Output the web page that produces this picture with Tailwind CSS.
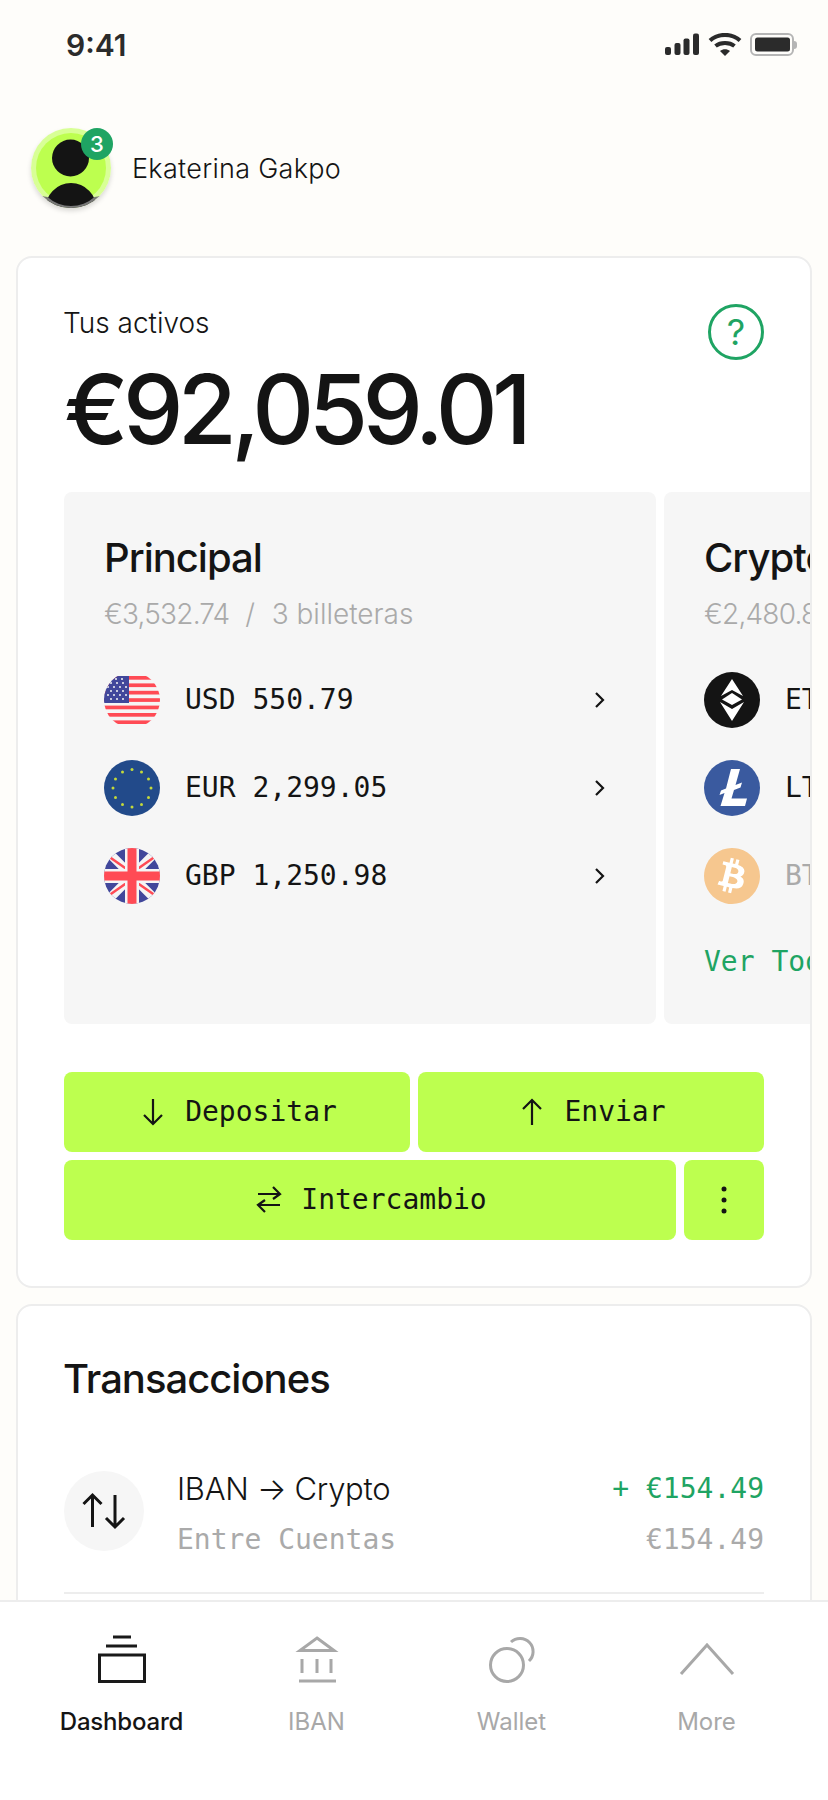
<!DOCTYPE html>
<html lang="es">
<head>
  <meta charset="UTF-8">
  <meta name="viewport" content="width=device-width, initial-scale=1.0">
  <title>Dashboard</title>
  <script src="https://cdn.jsdelivr.net/npm/@tailwindcss/browser@4"></script>
</head>
<body class="bg-[#fefdfa] font-['Inter',sans-serif] text-[#141414]">
  <div class="flex flex-col h-[1800px] overflow-hidden">
    <main class="flex-1 overflow-hidden">

      <!-- Status bar -->
      <div class="flex items-center justify-between h-[90px] pl-[66px] pr-[31px]">
        <span class="text-[30px] font-semibold text-[#2b2b2b]">9:41</span>
        <div class="flex items-center">
          <svg class="w-[130px] h-[24px]" viewBox="0 0 130 24" fill="#2b2b2b">
            <rect x="1" y="14" width="6" height="8" rx="2"/>
            <rect x="10.500" y="10" width="6" height="12" rx="2"/>
            <rect x="19.500" y="5.500" width="6" height="16.500" rx="2"/>
            <rect x="29" y="0.500" width="6" height="21.500" rx="2"/>
            <path d="M46 7.500 C54 0 68 0 76 7.500" fill="none" stroke="#2b2b2b" stroke-width="4"/>
            <path d="M51.500 13 C56.500 9 65.500 9 70.500 13" fill="none" stroke="#2b2b2b" stroke-width="4"/>
            <path d="M56 18 C59 15.500 63 15.500 66 18 L61 23 Z"/>
            <rect x="87" y="1" width="42" height="21" rx="5" fill="none" stroke="#b5b5b5" stroke-width="2"/>
            <rect x="91" y="4.500" width="35" height="14" rx="2.500"/>
          </svg>
          <span class="w-[3px] h-[8px] bg-[#b5b5b5] rounded-r-sm"></span>
        </div>
      </div>

      <!-- Profile -->
      <div class="flex items-center gap-[21px] pl-[31px] pt-[38px] pb-[48px]">
        <div class="relative w-[80px] h-[80px] rounded-full shadow-[0_3px_5px_rgba(0,0,0,0.15)]">
          <svg class="w-[80px] h-[80px]" viewBox="0 0 80 80">
            <defs><clipPath id="avatarClip"><circle cx="40" cy="40" r="40"/></clipPath></defs>
            <circle cx="40" cy="40" r="40" fill="#d8ff96"/>
            <circle cx="40" cy="40" r="35" fill="#bdff4f"/>
            <circle cx="39.500" cy="30" r="18.500" fill="#141414"/>
            <g clip-path="url(#avatarClip)">
              <ellipse cx="40" cy="82" rx="26" ry="27" fill="#141414"/>
              <path d="M16.500 69 L10 68 A40 40 0 0 0 70 68 L63.500 69 A35 35 0 0 1 16.500 69 Z" fill="#777"/>
            </g>
          </svg>
          <span class="absolute top-0 left-[50px] w-[32px] h-[32px] rounded-full bg-[#1fa463] text-white text-[22px] font-medium flex items-center justify-center">3</span>
        </div>
        <span class="text-[27px] font-light tracking-[0.3px] relative top-[1px]">Ekaterina Gakpo</span>
      </div>

      <!-- Assets card -->
      <section class="mx-[16px] h-[1032px] bg-white border-2 border-[#ededed] rounded-[16px] overflow-hidden px-[46px]">
        <div class="relative pt-[45px]">
          <p class="text-[28px] leading-[40px] font-light -ml-[1px]">Tus activos</p>
          <p class="text-[96px] leading-[108px] mt-[12px] font-medium tracking-[-5.6px]">€92,059.01</p>
          <span class="absolute top-[46px] right-0 w-[56px] h-[56px] rounded-full border-[3px] border-[#1fa463] text-[#1fa463] text-[36px] flex items-center justify-center">?</span>
        </div>

        <!-- Wallet panels -->
        <div class="flex gap-[8px] mt-[29px] -mr-[46px] overflow-hidden">
          <div class="w-[592px] h-[532px] shrink-0 bg-[#f6f6f6] rounded-[8px] pl-[40px] pr-[40px] pt-[40px]">
            <h3 class="text-[40px] leading-[52px] font-medium tracking-[-1px]">Principal</h3>
            <p class="text-[28px] leading-[40px] mt-[10px] font-light text-[#aaaaaa] whitespace-pre"><span class="tracking-[-0.8px]">€3,532.74</span>  /  <span class="ml-[1px]">3 billeteras</span></p>
            <ul class="mt-[38px] font-['DejaVu_Sans_Mono',monospace] text-[28px]">
              <li class="flex items-center h-[56px] gap-[25px]">
                <svg class="w-[56px] h-[56px] shrink-0" viewBox="0 0 56 56">
                  <defs>
                    <clipPath id="usCircle"><circle cx="28" cy="28" r="28"/></clipPath>
                    <clipPath id="usBand"><rect y="4" width="56" height="48"/></clipPath>
                  </defs>
                  <g clip-path="url(#usCircle)">
                    <g clip-path="url(#usBand)">
                      <rect width="56" height="56" fill="#f5f5f5"/>
                      <rect y="4" width="56" height="3.700" fill="#ff4b55"/>
                      <rect y="11.400" width="56" height="3.700" fill="#ff4b55"/>
                      <rect y="18.800" width="56" height="3.700" fill="#ff4b55"/>
                      <rect y="26.200" width="56" height="3.700" fill="#ff4b55"/>
                      <rect y="33.600" width="56" height="3.700" fill="#ff4b55"/>
                      <rect y="41" width="56" height="3.700" fill="#ff4b55"/>
                      <rect y="48.400" width="56" height="3.700" fill="#ff4b55"/>
                      <rect y="4" width="25" height="27" fill="#41479b"/>
                      <g fill="#f5f5f5">
                        <circle cx="12" cy="7" r="1"/><circle cx="18" cy="7" r="1"/><circle cx="7" cy="11" r="1"/><circle cx="13" cy="11" r="1"/><circle cx="19" cy="11" r="1"/>
                        <circle cx="4" cy="15" r="1"/><circle cx="10" cy="15" r="1"/><circle cx="16" cy="15" r="1"/><circle cx="22" cy="15" r="1"/>
                        <circle cx="7" cy="19" r="1"/><circle cx="13" cy="19" r="1"/><circle cx="19" cy="19" r="1"/><circle cx="4" cy="23" r="1"/><circle cx="10" cy="23" r="1"/><circle cx="16" cy="23" r="1"/><circle cx="22" cy="23" r="1"/>
                        <circle cx="7" cy="27" r="1"/><circle cx="13" cy="27" r="1"/><circle cx="19" cy="27" r="1"/>
                      </g>
                    </g>
                  </g>
                </svg>
                <span class="flex-1">USD 550.79</span>
                <svg class="w-[24px] h-[24px] mr-[4px]" viewBox="0 0 24 24" fill="none" stroke="#141414" stroke-width="2.200"><path d="M8 5 L15 12 L8 19"/></svg>
              </li>
              <li class="flex items-center h-[56px] gap-[25px] mt-[32px]">
                <svg class="w-[56px] h-[56px] shrink-0" viewBox="0 0 56 56">
                  <circle cx="28" cy="28" r="28" fill="#224a8a"/>
                  <g fill="#c4d93a">
                    <circle cx="28" cy="9.500" r="1.500"/><circle cx="37.500" cy="12" r="1.500"/><circle cx="44.500" cy="19" r="1.500"/><circle cx="47" cy="28" r="1.500"/><circle cx="44.500" cy="37.500" r="1.500"/><circle cx="37.500" cy="44.500" r="1.500"/>
                    <circle cx="28" cy="47" r="1.500"/><circle cx="18.500" cy="44.500" r="1.500"/><circle cx="11.500" cy="37.500" r="1.500"/><circle cx="9" cy="28" r="1.500"/><circle cx="11.500" cy="19" r="1.500"/><circle cx="18.500" cy="12" r="1.500"/>
                  </g>
                </svg>
                <span class="flex-1">EUR 2,299.05</span>
                <svg class="w-[24px] h-[24px] mr-[4px]" viewBox="0 0 24 24" fill="none" stroke="#141414" stroke-width="2.200"><path d="M8 5 L15 12 L8 19"/></svg>
              </li>
              <li class="flex items-center h-[56px] gap-[25px] mt-[32px]">
                <svg class="w-[56px] h-[56px] shrink-0" viewBox="0 0 56 56">
                  <defs><clipPath id="ukClip"><circle cx="28" cy="28" r="28"/></clipPath></defs>
                  <g clip-path="url(#ukClip)">
                    <rect width="56" height="56" fill="#41479b"/>
                    <path d="M0 0 L56 56 M56 0 L0 56" stroke="#f5f5f5" stroke-width="9"/>
                    <path d="M4 8 L24 22 M52 8 L32 22 M4 48 L24 34 M52 48 L32 34" stroke="#ff4b55" stroke-width="2.500"/>
                    <path d="M28 0 V56 M0 28 H56" stroke="#f5f5f5" stroke-width="14"/>
                    <path d="M28 0 V56 M0 28 H56" stroke="#ff4b55" stroke-width="9"/>
                  </g>
                </svg>
                <span class="flex-1">GBP 1,250.98</span>
                <svg class="w-[24px] h-[24px] mr-[4px]" viewBox="0 0 24 24" fill="none" stroke="#141414" stroke-width="2.200"><path d="M8 5 L15 12 L8 19"/></svg>
              </li>
            </ul>
          </div>

          <div class="w-[592px] h-[532px] shrink-0 bg-[#f6f6f6] rounded-[8px] pl-[40px] pt-[40px]">
            <h3 class="text-[40px] leading-[52px] font-medium tracking-[-1px]">Crypto</h3>
            <p class="text-[28px] leading-[40px] mt-[10px] font-light text-[#aaaaaa] whitespace-pre"><span class="tracking-[-0.8px]">€2,480.85</span>  /  <span class="ml-[1px]">3 billeteras</span></p>
            <ul class="mt-[38px] font-['DejaVu_Sans_Mono',monospace] text-[28px]">
              <li class="flex items-center h-[56px] gap-[25px]">
                <svg class="w-[56px] h-[56px] shrink-0" viewBox="0 0 56 56">
                  <circle cx="28" cy="28" r="28" fill="#141414"/>
                  <path d="M28 7 L39 24 L28 18 L17 24 Z" fill="#fff"/>
                  <path d="M28 21 L38 27.500 L28 33 L18 27.500 Z" fill="#fff"/>
                  <path d="M16 30 L28 37 L40 30 L28 49 Z" fill="#fff"/>
                </svg>
                <span class="whitespace-nowrap">ETH 0.45</span>
              </li>
              <li class="flex items-center h-[56px] gap-[25px] mt-[32px]">
                <svg class="w-[56px] h-[56px] shrink-0" viewBox="0 0 56 56">
                  <circle cx="28" cy="28" r="28" fill="#3a5a9f"/>
                  <path d="M27 9 H36 L31.500 25 L38 22.500 L36.500 27.500 L30 30 L27.500 38.500 H43 L41 46 H16.500 L20.500 33 L15.500 35 L17 30.500 L22 28.500 Z" fill="#fff"/>
                </svg>
                <span class="whitespace-nowrap">LTC 12.30</span>
              </li>
              <li class="flex items-center h-[56px] gap-[25px] mt-[32px]">
                <svg class="w-[56px] h-[56px] shrink-0" viewBox="0 0 24 24">
                  <circle cx="12" cy="12" r="11" fill="#fff"/>
                  <path fill="#f6c78f" d="M23.638 14.904c-1.602 6.43-8.113 10.34-14.542 8.736C2.67 22.05-1.244 15.525.362 9.105 1.962 2.67 8.475-1.243 14.9.358c6.43 1.605 10.342 8.115 8.738 14.548v-.002zm-6.35-4.613c.24-1.59-.974-2.45-2.64-3.03l.54-2.153-1.315-.33-.525 2.107c-.345-.087-.705-.167-1.064-.25l.526-2.127-1.32-.33-.54 2.165c-.285-.067-.565-.132-.84-.2l-1.815-.45-.35 1.407s.975.225.955.236c.535.136.63.486.615.766l-1.477 5.92c-.075.166-.24.406-.614.314.015.02-.96-.24-.96-.24l-.66 1.51 1.71.426.93.242-.54 2.19 1.32.327.54-2.17c.36.1.705.19 1.05.273l-.51 2.154 1.32.33.545-2.19c2.24.427 3.93.257 4.64-1.774.57-1.637-.03-2.58-1.217-3.196.854-.193 1.5-.76 1.68-1.93h.01zm-3.01 4.22c-.404 1.64-3.157.75-4.05.53l.72-2.9c.896.23 3.757.67 3.33 2.37zm.41-4.24c-.37 1.49-2.662.735-3.405.55l.654-2.64c.744.18 3.137.524 2.75 2.084v.006z"/>
                </svg>
                <span class="whitespace-nowrap text-[#aaaaaa]">BTC 0.02</span>
              </li>
            </ul>
            <p class="mt-[38px] text-[28px] leading-[40px] font-['DejaVu_Sans_Mono',monospace] text-[#1fa463] whitespace-nowrap">Ver Todo</p>
          </div>
        </div>

        <!-- Actions -->
        <div class="mt-[48px] flex flex-col gap-[8px] font-['DejaVu_Sans_Mono',monospace] text-[28px]">
          <div class="flex gap-[8px]">
            <button class="flex-1 h-[80px] bg-[#bdff4f] rounded-[8px] flex items-center justify-center gap-[16px]">
              <svg class="w-[32px] h-[32px]" viewBox="0 0 32 32" fill="none" stroke="#141414" stroke-width="2.200"><path d="M16 3 V28 M7 19 L16 28 L25 19"/></svg>
              <span>Depositar</span>
            </button>
            <button class="flex-1 h-[80px] bg-[#bdff4f] rounded-[8px] flex items-center justify-center gap-[16px]">
              <svg class="w-[32px] h-[32px]" viewBox="0 0 32 32" fill="none" stroke="#141414" stroke-width="2.200"><path d="M16 29 V4 M7 13 L16 4 L25 13"/></svg>
              <span>Enviar</span>
            </button>
          </div>
          <div class="flex gap-[8px]">
            <button class="flex-1 h-[80px] bg-[#bdff4f] rounded-[8px] flex items-center justify-center gap-[16px]">
              <svg class="w-[32px] h-[32px]" viewBox="0 0 32 32" fill="none" stroke="#141414" stroke-width="2.200"><path d="M5 10 H27 M20 3 L27 10 L20 15 M27 21 H5 M12 16 L5 21 L12 28"/></svg>
              <span>Intercambio</span>
            </button>
            <button class="w-[80px] h-[80px] bg-[#bdff4f] rounded-[8px] flex items-center justify-center">
              <svg class="w-[32px] h-[32px]" viewBox="0 0 32 32" fill="#141414"><circle cx="16" cy="5" r="2.500"/><circle cx="16" cy="16" r="2.500"/><circle cx="16" cy="27" r="2.500"/></svg>
            </button>
          </div>
        </div>
      </section>

      <!-- Transactions card -->
      <section class="mx-[16px] mt-[16px] bg-white border-2 border-[#ededed] rounded-[16px] px-[46px] pt-[47px] pb-[46px]">
        <h2 class="text-[40px] leading-[52px] font-medium tracking-[-1px] -ml-[1px]">Transacciones</h2>
        <div class="flex items-start gap-[33px] mt-[64px]">
          <div class="w-[80px] h-[80px] mt-[2px] rounded-full bg-[#f6f6f6] flex items-center justify-center shrink-0">
            <svg class="w-[48px] h-[48px]" viewBox="0 0 48 48" fill="none" stroke="#141414" stroke-width="3"><path d="M12.500 40 V8 M3.500 17 L12.500 8 L21.500 17 M35 8 V40 M26 31 L35 40 L44 31"/></svg>
          </div>
          <div class="flex-1">
            <p class="text-[31px] leading-[40px] font-light tracking-[-0.3px]">IBAN → Crypto</p>
            <p class="mt-[11px] leading-[40px] font-['DejaVu_Sans_Mono',monospace] text-[28px] text-[#aaaaaa]">Entre Cuentas</p>
          </div>
          <div class="text-right font-['DejaVu_Sans_Mono',monospace] text-[28px]">
            <p class="leading-[40px] text-[#1fa463]">+ €154.49</p>
            <p class="mt-[11px] leading-[40px] text-[#aaaaaa]">€154.49</p>
          </div>
        </div>
        <div class="mt-[32px] border-t-2 border-[#ededed]"></div>
      </section>
    </main>

    <!-- Bottom nav -->
    <nav class="h-[200px] shrink-0 bg-white border-t-2 border-[#ededed] grid grid-cols-4 px-[24px] pt-[33px] text-[24px] text-[#a8a8a8]">
      <a class="flex flex-col items-center font-medium text-[#141414]">
        <svg class="w-[48px] h-[48px]" viewBox="0 0 48 48" fill="none" stroke="#1a1a1a" stroke-width="3"><path d="M15 2 H33 M8 11 H39"/><rect x="1.500" y="20" width="45" height="26.500"/></svg>
        <span class="mt-[23px] leading-[32px] tracking-[-0.2px]">Dashboard</span>
      </a>
      <a class="flex flex-col items-center">
        <svg class="w-[48px] h-[48px]" viewBox="0 0 48 48" fill="none" stroke="#a8a8a8" stroke-width="3"><path d="M24 3 L41 15.500 H7 Z M9 24 V38 M24 24 V38 M38 24 V38 M6 46 H43"/></svg>
        <span class="mt-[23px] leading-[32px]">IBAN</span>
      </a>
      <a class="flex flex-col items-center">
        <svg class="w-[48px] h-[48px]" viewBox="0 0 48 48" fill="none" stroke="#a8a8a8" stroke-width="3"><circle cx="19" cy="30" r="16.500"/><path d="M23 7 A12.500 12.500 0 0 1 41 26"/></svg>
        <span class="mt-[23px] leading-[32px]">Wallet</span>
      </a>
      <a class="flex flex-col items-center">
        <svg class="w-[56px] h-[48px]" viewBox="0 0 56 48" fill="none" stroke="#a8a8a8" stroke-width="3"><path d="M2 39 L28 10 L54 39"/></svg>
        <span class="mt-[23px] leading-[32px]">More</span>
      </a>
    </nav>
  </div>
</body>
</html>
